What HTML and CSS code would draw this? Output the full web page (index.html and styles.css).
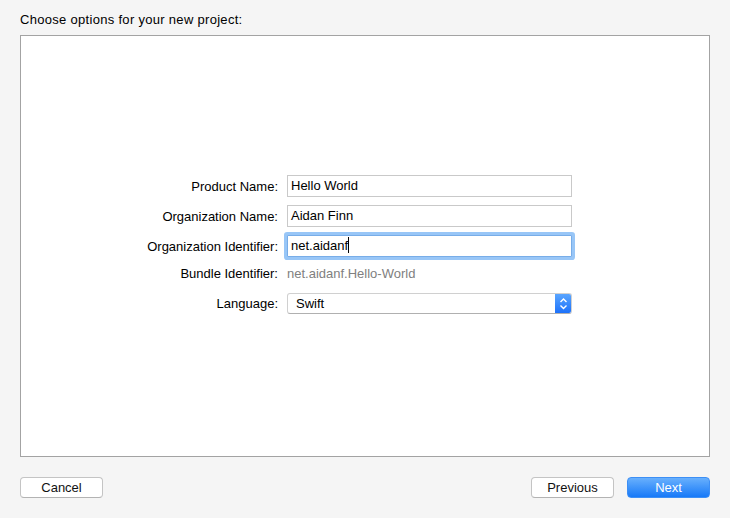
FILE: index.html
```html
<!DOCTYPE html>
<html lang="en">
<head>
    <meta charset="UTF-8">
    <meta name="viewport" content="width=device-width, initial-scale=1.0">
    <title>New project</title>
    <link rel="stylesheet" href="styles.css">
</head>
<body>

    <div class="title">Choose options for your new project:</div>

    <!-- options panel -->
    <div class="panel">
        <div class="form">
            <div class="row">
                <div class="label">Product Name:</div>
                <div class="field">Hello World</div>
            </div>
            <div class="row">
                <div class="label">Organization Name:</div>
                <div class="field">Aidan Finn</div>
            </div>
            <div class="row">
                <div class="label">Organization Identifier:</div>
                <div class="field focus">net.aidanf<span class="caret"></span></div>
            </div>
            <div class="row small">
                <div class="label">Bundle Identifier:</div>
                <div class="value">net.aidanf.Hello-World</div>
            </div>
            <div class="row popup-row">
                <div class="label">Language:</div>
                <div class="popup">
                    <span class="popup-text">Swift</span>
                    <span class="stepper">
                        <svg width="17" height="21" viewBox="0 0 17 21">
                            <polyline points="5.5,9 8.5,6 11.5,9" fill="none" stroke="#fff" stroke-width="1.4"/>
                            <polyline points="5.5,12.5 8.5,15.5 11.5,12.5" fill="none" stroke="#fff" stroke-width="1.4"/>
                        </svg>
                    </span>
                </div>
            </div>
        </div>
    </div>

    <!-- buttons -->
    <div class="footer">
        <button class="btn">Cancel</button>
        <div class="right">
            <button class="btn">Previous</button>
            <button class="btn primary">Next</button>
        </div>
    </div>

</body>
</html>
```

FILE: styles.css
```css
body {
    margin: 0;
    background: #f5f5f5;
    font-family: "Liberation Sans", Helvetica, Arial, sans-serif;
    font-size: 13px;
    color: #000;
}

.title {
    padding: 12px 0 0 20px;
    height: 23px;
    line-height: 16px;
    letter-spacing: 0.3px;
}

.panel {
    margin-left: 20px;
    width: 690px;
    height: 422px;
    box-sizing: border-box;
    border: 1px solid #a3a3a3;
    background: #fff;
}

.form {
    padding-top: 139px;
    margin-left: 119px;
}

.row {
    display: flex;
    align-items: center;
    height: 22px;
    margin-bottom: 8px;
}

.row.small {
    height: 16px;
    margin-bottom: 11px;
}

.label {
    width: 138px;
    margin-right: 9px;
    text-align: right;
    white-space: nowrap;
}

.field {
    width: 285px;
    height: 22px;
    box-sizing: border-box;
    border: 1px solid #c9c9c9;
    padding-left: 3px;
    line-height: 20px;
    background: #fff;
}

.field.focus {
    border-color: #78ade8;
    box-shadow: 0 0 0 3px #98c6f7;
    border-radius: 1px;
}

.caret {
    display: inline-block;
    width: 1px;
    height: 16px;
    background: #000;
    vertical-align: -3px;
}

.value {
    color: #808080;
}

.popup {
    width: 285px;
    height: 21px;
    box-sizing: border-box;
    border: 1px solid #d0d0d0;
    border-bottom-color: #b0b0b0;
    border-radius: 3px;
    display: flex;
    align-items: center;
    justify-content: space-between;
    background: #fff;
    overflow: hidden;
}

.popup-text {
    padding-left: 8px;
}

.stepper {
    width: 17px;
    height: 21px;
    margin-right: -1px;
    background: linear-gradient(#5da8ff, #1a6ffa);
    display: flex;
}

.footer {
    display: flex;
    justify-content: space-between;
    width: 690px;
    margin: 20px 0 0 20px;
}

.right {
    display: flex;
    gap: 13px;
}

.btn {
    width: 83px;
    height: 21px;
    padding: 0;
    font-family: "Liberation Sans", Helvetica, Arial, sans-serif;
    font-size: 13px;
    color: #111;
    background: #fff;
    border: 1px solid #c4c4c4;
    border-bottom-color: #b3b3b3;
    border-radius: 4px;
}

.btn.primary {
    color: #fff;
    border: 1px solid #3d8ff5;
    background: linear-gradient(#68b0fd, #1779f8);
}
```
